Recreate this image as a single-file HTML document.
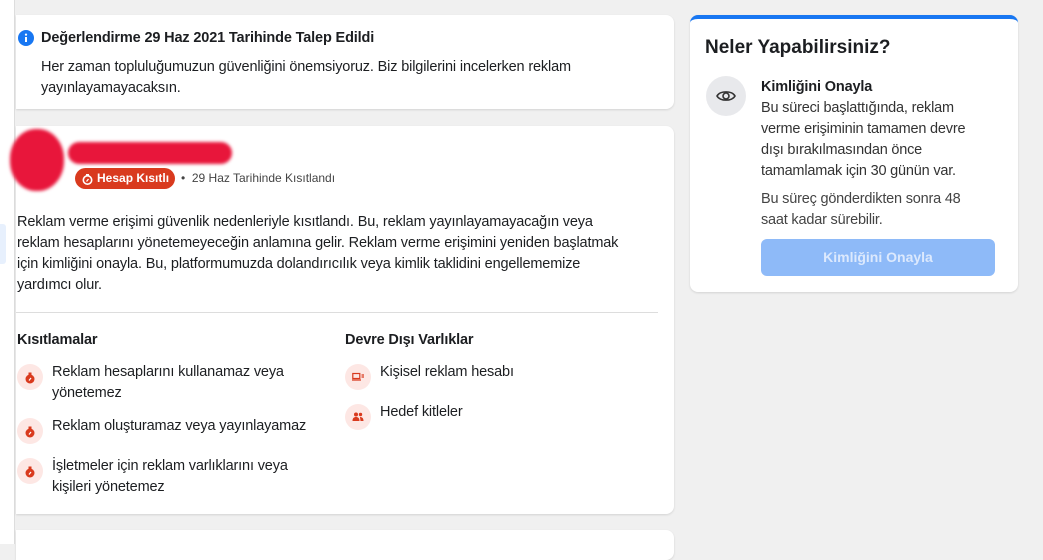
<!DOCTYPE html>
<html><head><meta charset="utf-8"><style>
*{box-sizing:border-box;margin:0;padding:0}
body{width:1043px;height:544px;overflow:hidden;background:#f0f0f0;font-family:"Liberation Sans",sans-serif;color:#1c1e21;position:relative}
.strip{position:absolute;left:0;top:0;width:15px;height:544px;background:#fff;border-right:1px solid #ddd}
.tab{position:absolute;left:0;top:224px;width:6px;height:40px;background:#e7f0fd;border-radius:0 3px 3px 0}
.card{position:absolute;background:#fff;border-radius:0 8px 8px 0;box-shadow:0 1px 2px rgba(0,0,0,.12)}
.t{font-size:14.5px;line-height:21px;white-space:nowrap;letter-spacing:-0.15px;color:#1c1e21}
.b{font-weight:bold}
.ic{position:absolute;width:26px;height:26px;border-radius:50%;background:#fde7e4}
.ic svg{position:absolute;left:7px;top:7px}
</style></head><body>
<div class="strip"></div><div class="tab"></div>

<div class="card" style="left:16px;top:15px;width:658px;height:94px">
  <svg style="position:absolute;left:2px;top:15px" width="16" height="16" viewBox="0 0 16 16"><circle cx="8" cy="8" r="8" fill="#1877f2"/><rect x="7" y="7" width="2" height="5" fill="#fff"/><circle cx="8" cy="4.6" r="1.1" fill="#fff"/></svg>
  <div class="t b" style="position:absolute;left:25px;top:13px">Değerlendirme 29 Haz 2021 Tarihinde Talep Edildi</div>
  <div class="t" style="position:absolute;left:25px;top:42px">Her zaman topluluğumuzun güvenliğini önemsiyoruz. Biz bilgilerini incelerken reklam<br>yayınlayamayacaksın.</div>
</div>

<div class="card" style="left:16px;top:126px;width:658px;height:388px">
  <div style="position:absolute;left:-6px;top:3px;width:54px;height:62px;border-radius:48%;background:#e8163b;filter:blur(1.5px)"></div>
  <div style="position:absolute;left:52px;top:16px;width:164px;height:22px;border-radius:11px;background:#e8163b;filter:blur(1.5px)"></div>
  <div style="position:absolute;left:59px;top:42px;width:100px;height:21px;border-radius:11px;background:#d93a1e;color:#fff;font-size:12px;font-weight:bold;line-height:21px;padding-left:22px">Hesap Kısıtlı</div>
  <svg style="position:absolute;left:66px;top:46px" width="11" height="13" viewBox="0 0 11 13"><circle cx="5.5" cy="8" r="4.2" fill="none" stroke="#fff" stroke-width="1.6"/><path d="M4 2h3v2H4z" fill="#fff"/><path d="M4.5 9.5l2-2.5" stroke="#fff" stroke-width="1.3"/></svg>
  <div style="position:absolute;left:165px;top:45px;font-size:12px;color:#444;white-space:nowrap">• &nbsp;29 Haz Tarihinde Kısıtlandı</div>
  <div class="t" style="position:absolute;left:1px;top:86px">Reklam verme erişimi güvenlik nedenleriyle kısıtlandı. Bu, reklam yayınlayamayacağın veya<br>reklam hesaplarını yönetemeyeceğin anlamına gelir. Reklam verme erişimini yeniden başlatmak<br>için kimliğini onayla. Bu, platformumuzda dolandırıcılık veya kimlik taklidini engellememize<br>yardımcı olur.</div>
  <div style="position:absolute;left:0;top:186px;width:642px;height:1px;background:#ddd"></div>
  <div class="t b" style="position:absolute;left:1px;top:204px">Kısıtlamalar</div>
  <div class="t b" style="position:absolute;left:329px;top:204px">Devre Dışı Varlıklar</div>

  <div class="ic" style="left:1px;top:238px"><svg width="12" height="13" viewBox="0 0 12 13"><circle cx="6" cy="8" r="4.5" fill="#d93a1e"/><rect x="4.5" y="1.5" width="3" height="2.5" fill="#d93a1e"/><path d="M5 9.5l2-2.5" stroke="#fff" stroke-width="1.2"/></svg></div>
  <div class="t" style="position:absolute;left:36px;top:236px">Reklam hesaplarını kullanamaz veya<br>yönetemez</div>
  <div class="ic" style="left:1px;top:292px"><svg width="12" height="13" viewBox="0 0 12 13"><circle cx="6" cy="8" r="4.5" fill="#d93a1e"/><rect x="4.5" y="1.5" width="3" height="2.5" fill="#d93a1e"/><path d="M5 9.5l2-2.5" stroke="#fff" stroke-width="1.2"/></svg></div>
  <div class="t" style="position:absolute;left:36px;top:290px">Reklam oluşturamaz veya yayınlayamaz</div>
  <div class="ic" style="left:1px;top:332px"><svg width="12" height="13" viewBox="0 0 12 13"><circle cx="6" cy="8" r="4.5" fill="#d93a1e"/><rect x="4.5" y="1.5" width="3" height="2.5" fill="#d93a1e"/><path d="M5 9.5l2-2.5" stroke="#fff" stroke-width="1.2"/></svg></div>
  <div class="t" style="position:absolute;left:36px;top:330px">İşletmeler için reklam varlıklarını veya<br>kişileri yönetemez</div>

  <div class="ic" style="left:329px;top:238px"><svg width="12" height="12" viewBox="0 0 12 12"><rect x="0.8" y="2.5" width="7" height="5" fill="none" stroke="#d93a1e" stroke-width="1.2"/><path d="M0 9h9M9.5 4h2.5M9.5 6h2.5" stroke="#d93a1e" stroke-width="1.2"/></svg></div>
  <div class="t" style="position:absolute;left:364px;top:236px">Kişisel reklam hesabı</div>
  <div class="ic" style="left:329px;top:278px"><svg width="12" height="12" viewBox="0 0 12 12"><circle cx="4" cy="3.5" r="2" fill="#d93a1e"/><circle cx="8.5" cy="3.5" r="1.7" fill="#d93a1e"/><path d="M0.5 10c0-3 1.5-4 3.5-4s3.5 1 3.5 4z M8 6c2 0 3.5 1 3.5 4H8.5z" fill="#d93a1e"/></svg></div>
  <div class="t" style="position:absolute;left:364px;top:276px">Hedef kitleler</div>
</div>

<div class="card" style="left:16px;top:530px;width:658px;height:30px"></div>

<div class="card" style="left:690px;top:15px;width:328px;height:277px;border-radius:8px;border-top:4px solid #1877f2">
  <div style="position:absolute;left:15px;top:18px;font-size:19px;font-weight:bold;white-space:nowrap">Neler Yapabilirsiniz?</div>
  <div style="position:absolute;left:16px;top:57px;width:40px;height:40px;border-radius:50%;background:#e8e9ec">
    <svg style="position:absolute;left:10px;top:12px" width="20" height="16" viewBox="0 0 20 16"><path d="M1 8C4 2.5 16 2.5 19 8 16 13.5 4 13.5 1 8z" fill="none" stroke="#333" stroke-width="1.6"/><circle cx="10" cy="8" r="3" fill="none" stroke="#333" stroke-width="1.6"/></svg>
  </div>
  <div class="t b" style="position:absolute;left:71px;top:58px">Kimliğini Onayla</div>
  <div class="t" style="position:absolute;left:71px;top:79px;color:#333;letter-spacing:-0.2px">Bu süreci başlattığında, reklam<br>verme erişiminin tamamen devre<br>dışı bırakılmasından önce<br>tamamlamak için 30 günün var.</div>
  <div class="t" style="position:absolute;left:71px;top:170px;color:#444;letter-spacing:-0.2px">Bu süreç gönderdikten sonra 48<br>saat kadar sürebilir.</div>
  <div style="position:absolute;left:71px;top:220px;width:234px;height:37px;border-radius:6px;background:#8ebaf8;color:#dce9fd;font-size:14px;font-weight:bold;text-align:center;line-height:37px">Kimliğini Onayla</div>
</div>
</body></html>
